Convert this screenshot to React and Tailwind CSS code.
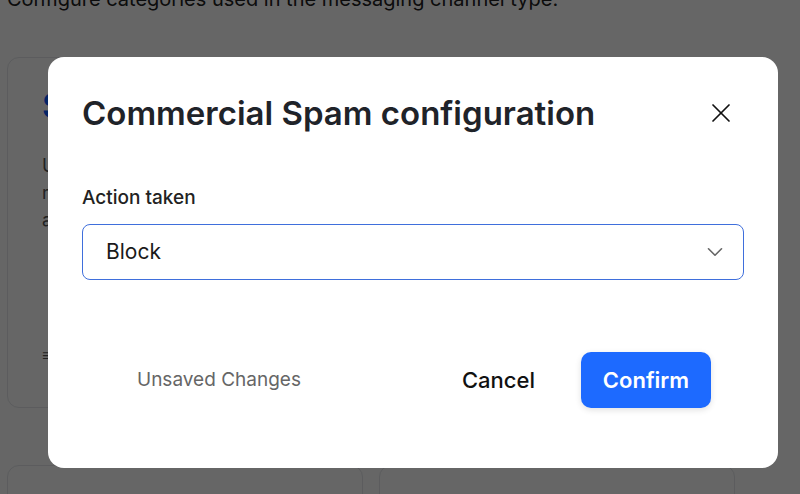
import React from 'react';
import { X, ChevronDown } from 'lucide-react';

const CategoryCard = ({ title, lines, footer }) => (
    <div className="h-[351px] rounded-[12px] border border-gray-200 bg-white px-[34px] pt-[28px]">
        <h3 className="text-[34px] leading-[40px] font-semibold text-[#0a5cff]">{title}</h3>
        <div className="mt-[26px] text-[18px] leading-[27px] text-[#555]">
            {lines.map((l) => (
                <p key={l} className="whitespace-nowrap">{l}</p>
            ))}
        </div>
        <p className="mt-[110px] text-[16px] text-[#555]">{footer}</p>
    </div>
);

const App = () => {
    return (
        <div className="relative h-[494px] overflow-hidden bg-white font-['Inter',sans-serif]">
            {/* Page behind the modal */}
            <div className="px-[7px]">
                <p className="-mt-[15px] text-[20px] leading-[28px] text-[#222]">
                    Configure categories used in the messaging channel type.
                </p>
                <div className="mt-[44px] grid grid-cols-[356px_356px] gap-x-[16px] gap-y-[57px]">
                    <CategoryCard
                        title="Spam"
                        lines={['Used to moderate unwanted', 'messages sent in channels', 'and direct messages.']}
                        footer="≡ 3 categories"
                    />
                    <CategoryCard
                        title="Harm"
                        lines={['Used to flag harmful content', 'messages and images', 'across your app.']}
                        footer="≡ 5 categories"
                    />
                    <div className="h-[200px] rounded-[12px] border border-gray-200 bg-white" />
                    <div className="h-[200px] rounded-[12px] border border-gray-200 bg-white" />
                </div>
            </div>

            {/* Overlay + modal */}
            <div className="absolute inset-0 bg-black/60 pl-[48px] pt-[57px]">
                <div className="w-[730px] h-[411px] rounded-[16px] bg-white px-[34px] pt-[33px]">
                    <div className="flex h-[46px] items-start justify-between">
                        <h2 className="mt-[3px] text-[33px] leading-[40px] font-semibold text-[#1f2329]">
                            Commercial Spam configuration
                        </h2>
                        <button className="flex h-[46px] w-[46px] items-center justify-center text-[#111]">
                            <X size={32} strokeWidth={1.3} />
                        </button>
                    </div>

                    <label className="mt-[50px] block text-[19px] leading-[24px] font-medium text-[#222]">
                        Action taken
                    </label>
                    <div className="mt-[14px] flex h-[56px] items-center justify-between rounded-[8px] border border-[#3f6fdc] pl-[23px] pr-[15px]">
                        <span className="text-[21px] text-[#1a1a1a]">Block</span>
                        <ChevronDown size={26} strokeWidth={1.5} className="text-[#666]" />
                    </div>

                    <div className="mt-[72px] flex h-[56px] items-center pl-[55px] pr-[33px]">
                        <span className="text-[19px] text-[#666]">Unsaved Changes</span>
                        <button className="ml-auto mr-[46px] text-[22px] font-medium text-[#111]">Cancel</button>
                        <button className="h-[56px] w-[130px] rounded-[10px] bg-[#1d6aff] text-[22px] font-semibold text-white shadow-[0_2px_6px_rgba(0,0,0,0.12)]">
                            Confirm
                        </button>
                    </div>
                </div>
            </div>
        </div>
    );
};

export default App;
